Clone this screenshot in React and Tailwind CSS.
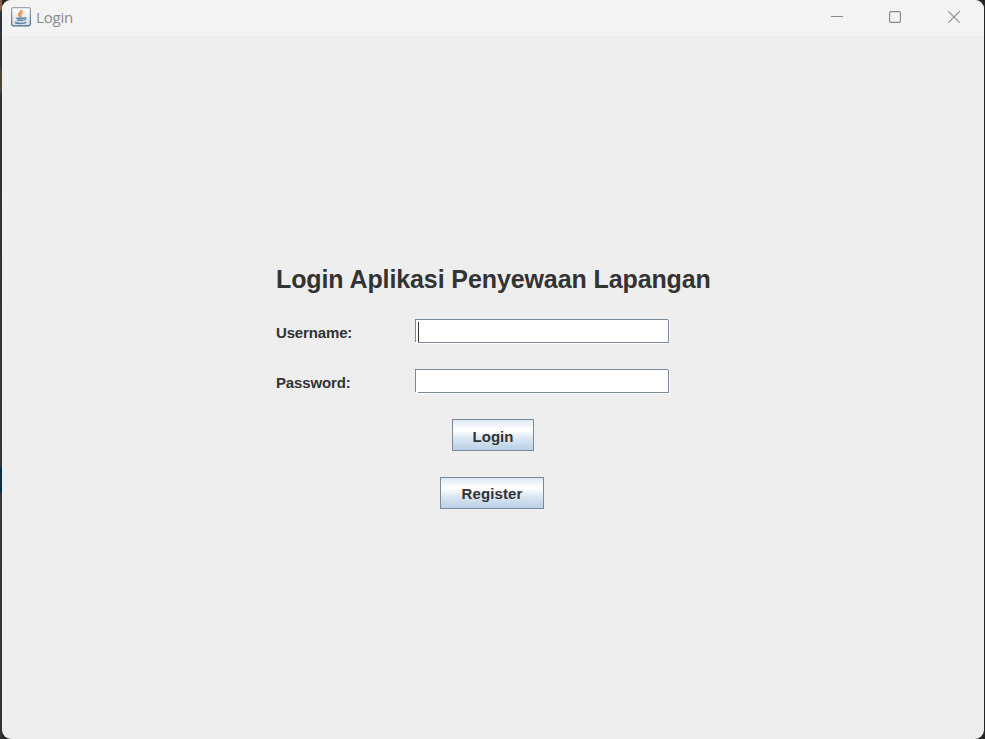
import React from 'react';

function JavaIcon() {
  return (
    <svg width="20" height="20" viewBox="0 0 20 20" fill="none">
      <defs>
        <linearGradient id="tile" x1="0" y1="0" x2="0" y2="1">
          <stop offset="0" stopColor="#ffffff" />
          <stop offset="1" stopColor="#d3dbe2" />
        </linearGradient>
        <linearGradient id="edge" x1="0" y1="0" x2="0" y2="1">
          <stop offset="0" stopColor="#9ba8b2" />
          <stop offset="1" stopColor="#4e6c84" />
        </linearGradient>
      </defs>
      <rect x="0.6" y="0.6" width="18.8" height="18.2" rx="1.8" fill="url(#tile)" stroke="url(#edge)" strokeWidth="1.2" />
      <path d="M10.6 3c.7 2-2.8 2.800-2.700 4.600 0 1 1 1.500 1.600 2.400" stroke="#e88a3a" strokeWidth="1.9" />
      <path d="M12.200 5.600c-1.600.7-2.500 1.300-2.200 2.200.3.7.8 1.200 0 2.200" stroke="#ee9f5c" strokeWidth="1.4" />
      <path d="M5.300 11.300h8M6 13.300h6.500M4 15.500c2.700 1.200 8.500 1.200 11-.2" stroke="#5482a3" strokeWidth="1.500" />
      <path d="M13.200 10.800c2.400-.8 2.700 1.500-.2 2.300" stroke="#5482a3" strokeWidth="1.1" />
    </svg>
  );
}

function TitleBar() {
  return (
    <header className="flex h-9 shrink-0 items-start bg-[#f3f3f3] text-[#8b8b8b]">
      <div className="flex items-start pl-[9px] pt-[7px]">
        <JavaIcon />
        <span className="ml-[5px] font-['Open_Sans',sans-serif] text-[15px] leading-[21px] tracking-[-0.2px]">Login</span>
      </div>
      <div className="ml-auto flex pr-[24px] pt-[11px]">
        <svg width="12" height="12" className="mr-[46px]" stroke="currentColor">
          <path d="M0 5.500h12" />
        </svg>
        <svg width="12" height="12" className="mr-[47px]" fill="none" stroke="currentColor" strokeWidth="1.200">
          <rect x="0.600" y="0.600" width="10.800" height="10.800" rx="1.200" />
        </svg>
        <svg width="12" height="12" stroke="currentColor" strokeWidth="1.100">
          <path d="M0.200 0.200L11.800 11.800M11.800 0.200L0.200 11.800" />
        </svg>
      </div>
    </header>
  );
}

function Field({ label, type, focused }) {
  return (
    <label className="flex h-6">
      <span className="w-[139px] pt-[5px] text-[15px] leading-[18px] tracking-[-0.15px]">{label}</span>
      <span className="relative flex h-6 w-[254px] border border-[#7a8a99] bg-white shadow-[1px_1px_0_#fff]">
        <input type={type} className="w-full bg-transparent px-1 outline-none" />
        {focused && <i className="absolute left-[2px] top-[2px] h-5 w-px bg-[#333]" />}
        <i className="absolute -bottom-px -left-px h-px w-[3px] bg-white" />
        <i className="absolute -right-px -top-px h-px w-px bg-[#eee]" />
      </span>
    </label>
  );
}

function Button({ children, className }) {
  return (
    <button
      className={`${className} h-8 border border-[#7a8a99] bg-[linear-gradient(#dde8f3_0%,#fff_30%,#fff_35%,#dde8f3_60%,#b8cfe5_100%)] text-[15px] font-bold leading-[18px]`}
    >
      {children}
    </button>
  );
}

export default function App() {
  return (
    <div className="h-[739px] w-[985px] overflow-hidden bg-[linear-gradient(90deg,transparent_2px,#252525_2px),linear-gradient(#8b5d42_0px,#8b5d42_10px,#30343a_11px,#30343a_66px,#4c4233_70px,#4c4233_92px,#2a3036_94px,#30383e_467px,#063052_468px,#063052_492px,#34383c_494px,#333_739px)] pl-[2px] pr-px">
      <main className="flex h-full flex-col overflow-hidden rounded-[9px] bg-[#eee] font-['Liberation_Sans',Arial,sans-serif] font-bold text-[#333]">
        <div className="font-normal">
          <TitleBar />
        </div>
        <form className="ml-[274px] mt-[228px] flex w-[436px] flex-col" onSubmit={(e) => e.preventDefault()}>
          <h1 className="whitespace-nowrap text-[25px] leading-[30px] tracking-[-0.1px]">Login Aplikasi Penyewaan Lapangan</h1>
          <div className="mt-[25px] flex flex-col gap-[26px]">
            <Field label="Username:" type="text" focused />
            <Field label="Password:" type="password" />
          </div>
          <Button className="ml-[176px] mt-[26px] w-[82px] pt-[3px]">Login</Button>
          <Button className="ml-[164px] mt-[26px] w-[104px] pt-px tracking-[0.1px]">Register</Button>
        </form>
      </main>
    </div>
  );
}
